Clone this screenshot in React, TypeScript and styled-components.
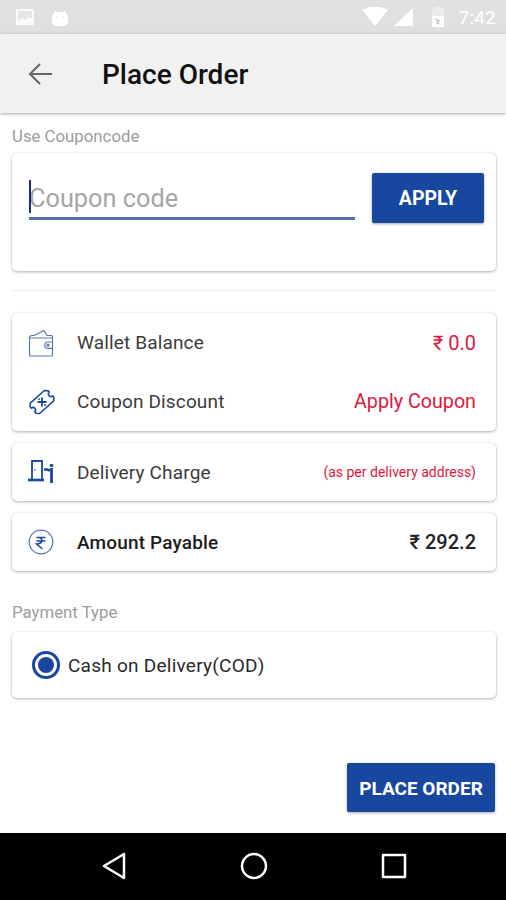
import React from 'react';
import styled, { createGlobalStyle } from 'styled-components';

const GlobalStyle = createGlobalStyle`
  html, body {
    margin: 0;
    padding: 0;
    background: #fff;
    font-family: Roboto, "Noto Sans", sans-serif;
  }
  * { box-sizing: border-box; }
`;

const blue = '#17479e';
const red = '#e0173c';

const Screen = styled.div`
  width: 506px;
  height: 900px;
  display: flex;
  flex-direction: column;
  overflow: hidden;
  background: #fff;
`;

const StatusBar = styled.div`
  height: 34px;
  flex: none;
  background: #e0e0e0;
  display: flex;
  align-items: center;
  padding: 0 10px 0 16px;
  color: #fff;
`;

const StatusLeft = styled.div`
  display: flex;
  align-items: center;
  gap: 18px;
  flex: 1;
`;

const StatusRight = styled.div`
  display: flex;
  align-items: center;
`;

const StatusGlyph = styled.svg<{ $left?: number }>`
  margin-left: ${({ $left }) => $left ?? 0}px;
`;

const Clock = styled.span`
  font-size: 19px;
  margin-left: 14px;
  letter-spacing: 0.2px;
`;

const Toolbar = styled.header`
  height: 79px;
  flex: none;
  background: #f1f1f1;
  box-shadow: 0 1px 3px rgba(0, 0, 0, 0.35);
  display: flex;
  align-items: center;
  padding-left: 28px;
  position: relative;
`;

const Title = styled.h1`
  margin: 2px 0 0 50px;
  font-size: 28px;
  font-weight: 500;
  color: #111;
`;

const Content = styled.main`
  flex: 1;
  padding: 14px 10px 21px 12px;
  display: flex;
  flex-direction: column;
`;

const SectionLabel = styled.div<{ $top?: number }>`
  font-size: 16.8px;
  line-height: 19px;
  color: #9c9c9c;
  margin-top: ${({ $top }) => $top ?? 0}px;
`;

const Card = styled.section<{ $top?: number }>`
  background: #fff;
  border-radius: 5px;
  box-shadow: 0 1px 3px rgba(0, 0, 0, 0.3), 0 0 2px rgba(0, 0, 0, 0.08);
  margin-top: ${({ $top }) => $top ?? 12}px;
`;

const CouponCard = styled(Card)`
  height: 118px;
  padding: 20px 12px 0 17px;
  display: flex;
  align-items: flex-start;
  gap: 17px;
`;

const CouponField = styled.div`
  width: 326px;
  height: 47px;
  border-bottom: 3px solid #5470ad;
  display: flex;
  align-items: center;
  position: relative;
`;

const Caret = styled.span`
  position: absolute;
  left: 0;
  top: 7px;
  width: 2px;
  height: 33px;
  background: #1a2a90;
`;

const Placeholder = styled.span`
  font-size: 25.3px;
  color: #a6a6a6;
  padding-top: 6px;
`;

const Button = styled.button`
  border: none;
  border-radius: 2px;
  background: ${blue};
  color: #fff;
  font-family: inherit;
  font-weight: 700;
  font-size: 19.5px;
  padding: 1px 0 0;
  box-shadow: 0 1px 3px rgba(0, 0, 0, 0.35);
`;

const ApplyButton = styled(Button)`
  width: 112px;
  height: 50px;
`;

const Divider = styled.hr`
  border: none;
  height: 1px;
  background: #ececec;
  margin: 19px 0 22px;
`;

const Row = styled.div<{ $height: number }>`
  height: ${({ $height }) => $height}px;
  display: flex;
  align-items: center;
  padding: 0 20px 0 16px;
`;

const IconSlot = styled.div`
  width: 49px;
  flex: none;
  display: flex;
  align-items: center;
`;

const RowLabel = styled.span<{ $strong?: boolean }>`
  flex: 1;
  font-size: 19px;
  letter-spacing: 0.15px;
  color: ${({ $strong }) => ($strong ? '#1c1c1c' : '#3c3c3c')};
  font-weight: ${({ $strong }) => ($strong ? 500 : 400)};
`;

const RowValue = styled.span<{ $size?: number; $dark?: boolean }>`
  font-size: ${({ $size }) => $size ?? 20}px;
  color: ${({ $dark }) => ($dark ? '#222' : red)};
  font-weight: ${({ $dark }) => ($dark ? 500 : 400)};
`;

const RadioRow = styled.div`
  height: 66px;
  display: flex;
  align-items: center;
  gap: 8px;
  padding-left: 20px;
  font-size: 19px;
  letter-spacing: 0.25px;
  color: #2a2a2a;
`;

const Radio = styled.span`
  width: 28px;
  height: 28px;
  border-radius: 50%;
  border: 3px solid ${blue};
  display: flex;
  align-items: center;
  justify-content: center;
  &::after {
    content: '';
    width: 16px;
    height: 16px;
    border-radius: 50%;
    background: ${blue};
  }
`;

const Actions = styled.div`
  margin-top: auto;
  display: flex;
  justify-content: flex-end;
  padding-right: 1px;
`;

const PlaceButton = styled(Button)`
  width: 148px;
  height: 49px;
  font-size: 19px;
`;

const NavBar = styled.nav`
  height: 67px;
  flex: none;
  background: #000;
  display: flex;
  align-items: center;
  justify-content: center;
  gap: 113px;
  padding: 0 0 2px 2px;
`;

const WalletIcon = () => (
  <svg width="26" height="28" viewBox="0 0 26 28" fill="none" stroke="#5a78b8" strokeWidth="1.2">
    <path d="M1.500 9v17a1 1 0 0 0 1 1h21a1 1 0 0 0 1-1V7.500a1 1 0 0 0-1-1h-2.500" />
    <path d="M1.500 9c0-1.500 1-2.500 2.500-2.500h2L16 1.500l3 5h3M1.500 9H25" />
    <path d="M25 13h-5a3.200 3.200 0 0 0 0 6.400h5" />
    <circle cx="20" cy="16.200" r="1" />
  </svg>
);

const CouponIcon = () => (
  <svg width="28" height="28" viewBox="0 0 28 28" fill="none" stroke={blue} strokeWidth="1.500" strokeLinejoin="round">
    <g transform="rotate(-42 14 14)">
      <path d="M2 9.500 4.500 7H23.500L26 9.500v2a2.500 2.500 0 0 0 0 5v2L23.500 21H4.500L2 18.500v-2a2.500 2.500 0 0 0 0-5z" />
    </g>
    <path d="M9.500 14h9M14 9.500v9" strokeWidth="1.800" />
    <circle cx="11" cy="11" r=".9" fill={blue} stroke="none" />
    <circle cx="17" cy="17" r=".9" fill={blue} stroke="none" />
  </svg>
);

const DeliveryIcon = () => (
  <svg width="27" height="26" viewBox="0 0 27 26" fill="none" stroke={blue}>
    <path d="M4 20V2h10v18" strokeWidth="1.800" />
    <path d="M0 21h16" strokeWidth="2.600" />
    <circle cx="7" cy="11" r=".8" fill={blue} stroke="none" />
    <path d="M16 10.500h3l3 1" strokeWidth="2.400" />
    <circle cx="23.500" cy="6.500" r="1.800" fill={blue} stroke="none" />
    <path d="M23.500 9v15" strokeWidth="2.800" />
  </svg>
);

const RupeeIcon = () => (
  <svg width="26" height="26" viewBox="0 0 26 26" fill="none" stroke="#5a78b8" strokeWidth="1.300">
    <circle cx="13" cy="13" r="11.800" />
    <path d="M8.500 8.500h9M8.500 12h9M11 8.500c4 0 4 6.500 -2.500 6.500l6 5" stroke={blue} strokeWidth="1.500" />
  </svg>
);

const App = () => (
  <>
    <GlobalStyle />
    <Screen>
      <StatusBar>
        <StatusLeft>
          <svg width="18" height="18" viewBox="0 0 18 18" fill="#fff" opacity=".85">
            <path d="M0 1h18v16H0z" />
            <path d="M2 3h14v8l-3-2-4 3-3-2-4 3z" fill="#e6e6e6" />
          </svg>
          <svg width="16" height="17" viewBox="0 0 16 17" fill="#fff">
            <path d="M3 1l2 2h6l2-2 .5 3c1 .8 2.500 1.500 2.500 4v4c0 3-2 5-5 5H5c-3 0-5-2-5-5V8c0-2.500 1.500-3.200 2.500-4z" />
            <circle cx="5" cy="8" r=".8" fill="#ddd" />
            <circle cx="11" cy="8" r=".8" fill="#ddd" />
          </svg>
        </StatusLeft>
        <StatusRight>
          <svg width="26" height="20" viewBox="0 0 26 20" fill="#fff">
            <path d="M0 3c7-4.500 19-4.500 26 0L13 19z" />
          </svg>
          <StatusGlyph $left={5} width="20" height="20" viewBox="0 0 20 20" fill="#fff">
            <path d="M20 1v18H1z" />
          </StatusGlyph>
          <StatusGlyph $left={18} width="14" height="22" viewBox="0 0 14 22" fill="#fff">
            <path d="M4 1h6v2H4z" opacity=".4" />
            <path d="M1 3h12v7H1z" opacity=".4" />
            <path d="M1 10h12v11H1z" />
            <path d="M4 12l6 3-3 1 3 3-6-2 2-1z" fill="#c9c9c9" />
          </StatusGlyph>
          <Clock>7:42</Clock>
        </StatusRight>
      </StatusBar>
      <Toolbar>
        <svg width="24" height="24" viewBox="0 0 24 24" fill="none" stroke="#666" strokeWidth="2">
          <path d="M24 12H2M12 2 2 12l10 10" />
        </svg>
        <Title>Place Order</Title>
      </Toolbar>
      <Content>
        <SectionLabel>Use Couponcode</SectionLabel>
        <CouponCard $top={7}>
          <CouponField>
            <Caret />
            <Placeholder>Coupon code</Placeholder>
          </CouponField>
          <ApplyButton>APPLY</ApplyButton>
        </CouponCard>
        <Divider />
        <Card $top={0}>
          <Row $height={59}>
            <IconSlot><WalletIcon /></IconSlot>
            <RowLabel>Wallet Balance</RowLabel>
            <RowValue>₹ 0.0</RowValue>
          </Row>
          <Row $height={59}>
            <IconSlot><CouponIcon /></IconSlot>
            <RowLabel>Coupon Discount</RowLabel>
            <RowValue $size={19.7}>Apply Coupon</RowValue>
          </Row>
        </Card>
        <Card>
          <Row $height={58}>
            <IconSlot><DeliveryIcon /></IconSlot>
            <RowLabel>Delivery Charge</RowLabel>
            <RowValue $size={14}>(as per delivery address)</RowValue>
          </Row>
        </Card>
        <Card>
          <Row $height={58}>
            <IconSlot><RupeeIcon /></IconSlot>
            <RowLabel $strong>Amount Payable</RowLabel>
            <RowValue $dark>₹ 292.2</RowValue>
          </Row>
        </Card>
        <SectionLabel $top={32}>Payment Type</SectionLabel>
        <Card $top={10}>
          <RadioRow>
            <Radio />
            Cash on Delivery(COD)
          </RadioRow>
        </Card>
        <Actions>
          <PlaceButton>PLACE ORDER</PlaceButton>
        </Actions>
      </Content>
      <NavBar>
        <svg width="26" height="28" viewBox="0 0 26 28" fill="none" stroke="#fff" strokeWidth="2.500" strokeLinejoin="round">
          <path d="M23 2v24L3 14z" />
        </svg>
        <svg width="28" height="28" viewBox="0 0 28 28" fill="none" stroke="#fff" strokeWidth="2.500">
          <circle cx="14" cy="14" r="12" />
        </svg>
        <svg width="26" height="26" viewBox="0 0 26 26" fill="none" stroke="#fff" strokeWidth="2.500" strokeLinejoin="round">
          <path d="M2 2h22v22H2z" />
        </svg>
      </NavBar>
    </Screen>
  </>
);

export default App;
